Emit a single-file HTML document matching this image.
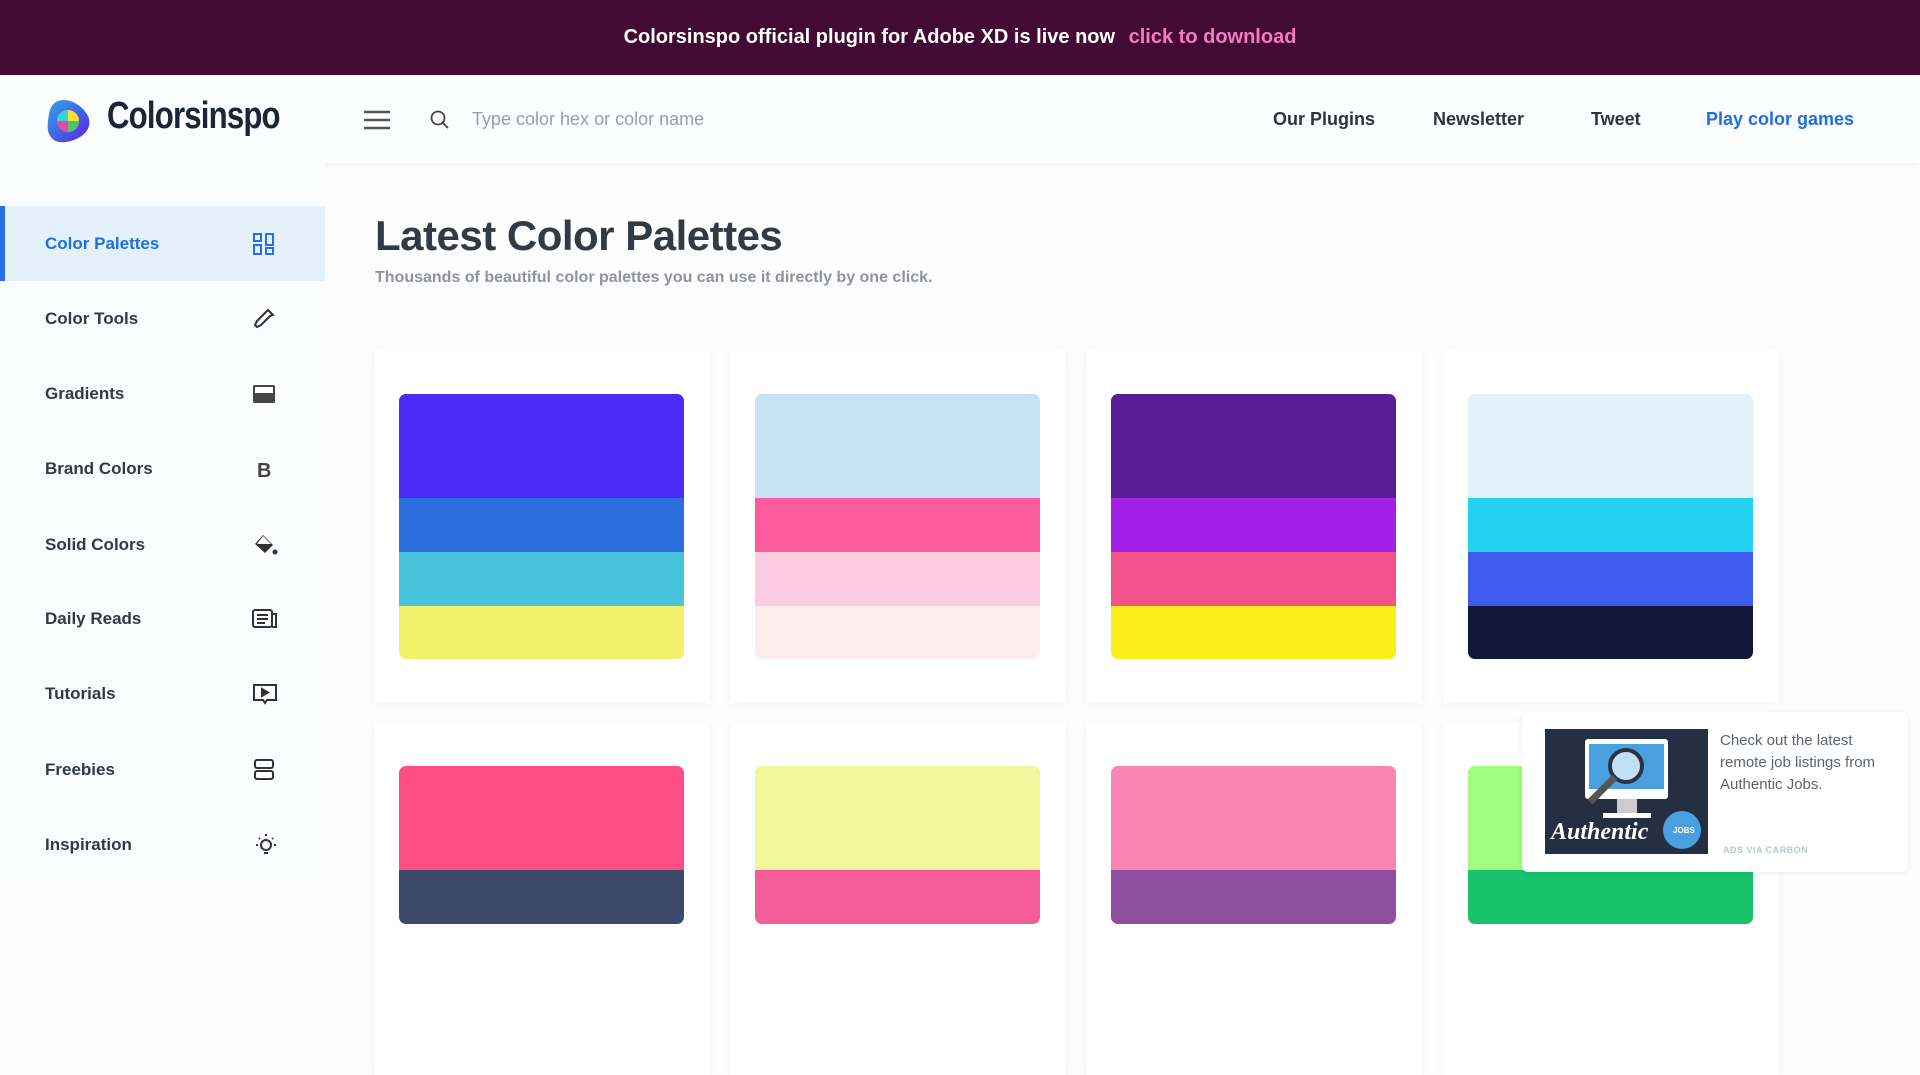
<!DOCTYPE html>
<html><head><meta charset="utf-8"><style>
*{margin:0;padding:0;box-sizing:border-box}
body{width:1920px;height:878px;overflow:hidden;background:#fdfdfe;font-family:"Liberation Sans",sans-serif;position:relative}
.banner{position:absolute;left:0;top:0;width:1920px;height:75px;background:#430b33;color:#fff;font-weight:bold;font-size:20px;text-align:center;line-height:75px}
.banner span{color:#f57ac4;margin-left:8px}
.header{position:absolute;left:0;top:75px;width:1920px;height:88px;background:#fcfdff;box-shadow:0 2px 6px rgba(0,0,0,.06)}
.logo{position:absolute;left:107px;top:20px;font-size:38px;font-weight:bold;color:#1d2437;letter-spacing:-1px;transform:scaleX(.82);transform-origin:left}
.nav{position:absolute;top:34px;font-size:18px;font-weight:bold;color:#2d3340}
.side{position:absolute;left:0;top:163px;width:325px;height:715px;background:#fbfcfe}
.item{position:absolute;left:0;width:325px;height:75px;font-size:17px;font-weight:bold;color:#333a44;line-height:75px;padding-left:45px}
.item svg{position:absolute;left:252px;top:26px}
.item.act{background:#e4f1fa;color:#1f6fe0;border-left:5px solid #2a6ee6;padding-left:40px}
.item.act svg{left:247px}
h1{position:absolute;left:375px;top:212px;font-size:42px;color:#343a45;font-weight:bold;letter-spacing:-.5px}
.sub{position:absolute;left:375px;top:269px;font-size:16px;color:#8f949b;font-weight:bold}
.card{position:absolute;width:334px;height:353px;background:#fff;box-shadow:0 2px 12px rgba(0,0,0,.04)}
.pal{position:absolute;left:24px;top:44px;width:285px;border-radius:7px;overflow:hidden}
.pal div{width:100%}
.ad{position:absolute;left:1522px;top:712px;width:386px;height:160px;background:#fff;border-radius:6px;box-shadow:0 1px 6px rgba(0,0,0,.08)}
</style></head><body>
<div class="banner">Colorsinspo official plugin for Adobe XD is live now <span>click to download</span></div>
<div class="header">
<svg style="position:absolute;left:46px;top:23px" width="46" height="46" viewBox="0 0 46 46"><defs><linearGradient id="g" x1="0" y1="0" x2="1" y2="1"><stop offset="0" stop-color="#2ea8e8"/><stop offset="1" stop-color="#5a22e0"/></linearGradient></defs><path d="M10 4C20-2 36 6 42 18 48 32 34 42 20 44 6 46 0 36 2 24 3 14 4 8 10 4Z" fill="url(#g)"/><circle cx="22" cy="23" r="11" fill="#f4e23a"/><path d="M22 23V12A11 11 0 0 0 11 23Z" fill="#3ad0d6"/><path d="M22 23H11A11 11 0 0 0 22 34Z" fill="#e04aa8"/><path d="M22 23V34A11 11 0 0 0 33 23Z" fill="#4fc36a"/></svg>
<div class="logo">Colorsinspo</div>
<svg style="position:absolute;left:364px;top:35px" width="26" height="20"><g stroke="#555" stroke-width="2.4"><line x1="0" y1="2" x2="26" y2="2"/><line x1="0" y1="10" x2="26" y2="10"/><line x1="0" y1="18" x2="26" y2="18"/></g></svg>
<svg style="position:absolute;left:430px;top:35px" width="20" height="20"><circle cx="8" cy="8" r="6.5" fill="none" stroke="#444" stroke-width="1.8"/><line x1="13" y1="13" x2="18" y2="18" stroke="#444" stroke-width="1.8"/></svg>
<div style="position:absolute;left:472px;top:34px;font-size:18px;color:#9a9ea5">Type color hex or color name</div>
<div class="nav" style="left:1273px">Our Plugins</div>
<div class="nav" style="left:1433px">Newsletter</div>
<div class="nav" style="left:1591px">Tweet</div>
<div class="nav" style="left:1706px;color:#1f6fe0">Play color games</div>
</div>
<div class="side">
<div class="item act" style="top:43px">Color Palettes<svg width="24" height="24" viewBox="0 0 24 24" fill="none" stroke="#2a6ee6" stroke-width="2"><rect x="2" y="2" width="7" height="7"/><rect x="14" y="2" width="7" height="11"/><rect x="2" y="13" width="7" height="9"/><rect x="14" y="16" width="7" height="6"/></svg></div>
<div class="item" style="top:118px">Color Tools<svg width="24" height="24" viewBox="0 0 24 24" fill="none" stroke="#333" stroke-width="2"><path d="M16 3l5 5-3 1-9 9-4 2-2-2 2-4 9-9z"/></svg></div>
<div class="item" style="top:193px">Gradients<svg width="24" height="24" viewBox="0 0 24 24"><rect x="1" y="3" width="22" height="18" rx="2" fill="#444"/><rect x="3" y="5" width="18" height="6" fill="#fff"/></svg></div>
<div class="item" style="top:268px">Brand Colors<svg width="24" height="24" viewBox="0 0 24 24"><text x="5" y="20" font-family="Liberation Sans" font-weight="bold" font-size="20" fill="#444">B</text></svg></div>
<div class="item" style="top:344px">Solid Colors<svg width="26" height="24" viewBox="0 0 26 24"><path d="M11 2l10 10-8 8-10-9z" fill="#333"/><path d="M5 11h14l-8-8z" fill="#fff"/><circle cx="23" cy="19" r="2.5" fill="#333"/></svg></div>
<div class="item" style="top:418px">Daily Reads<svg width="26" height="24" viewBox="0 0 26 24" fill="none" stroke="#333" stroke-width="2"><rect x="1" y="3" width="19" height="17" rx="2"/><path d="M20 7h4v13h-4M5 8h11M5 12h11M5 16h8"/></svg></div>
<div class="item" style="top:493px">Tutorials<svg width="26" height="24" viewBox="0 0 26 24" fill="none" stroke="#333" stroke-width="2"><path d="M2 3h22v15H15l-2 3-2-3H2z"/><path d="M10 7l6 3.5-6 3.5z" fill="#333"/></svg></div>
<div class="item" style="top:569px">Freebies<svg width="24" height="24" viewBox="0 0 24 24" fill="none" stroke="#333" stroke-width="2"><rect x="3" y="2" width="18" height="8" rx="2"/><rect x="3" y="13" width="18" height="8" rx="2"/></svg></div>
<div class="item" style="top:644px">Inspiration<svg width="28" height="24" viewBox="0 0 28 24" fill="none" stroke="#333" stroke-width="2"><circle cx="14" cy="12" r="5"/><path d="M12 20h4M14 1v2M4 12h2M22 12h2M7 5l1 1M21 5l-1 1"/></svg></div>
</div>
<h1>Latest Color Palettes</h1>
<div class="sub">Thousands of beautiful color palettes you can use it directly by one click.</div>

<div class="card" style="left:375px;top:350px"><div class="pal"><div style="height:104px;background:#4b2bf5"></div><div style="height:54px;background:#2a6ee0"></div><div style="height:54px;background:#48c3dc"></div><div style="height:53px;background:#f3f06a"></div></div></div>
<div class="card" style="left:731px;top:350px"><div class="pal"><div style="height:104px;background:#c5e3f3"></div><div style="height:54px;background:#fc5c9c"></div><div style="height:54px;background:#fccde2"></div><div style="height:53px;background:#fdeeee"></div></div></div>
<div class="card" style="left:1087px;top:350px"><div class="pal"><div style="height:104px;background:#5a1b97"></div><div style="height:54px;background:#a020e8"></div><div style="height:54px;background:#f0548a"></div><div style="height:53px;background:#fbee1a"></div></div></div>
<div class="card" style="left:1444px;top:350px"><div class="pal"><div style="height:104px;background:#e3f1f8"></div><div style="height:54px;background:#23d2ef"></div><div style="height:54px;background:#3f5bef"></div><div style="height:53px;background:#12183a"></div></div></div>

<div class="card" style="left:375px;top:722px"><div class="pal"><div style="height:104px;background:#fd4f84"></div><div style="height:54px;background:#3e4a6a"></div></div></div>
<div class="card" style="left:731px;top:722px"><div class="pal"><div style="height:104px;background:#f3f79b"></div><div style="height:54px;background:#f65b9a"></div></div></div>
<div class="card" style="left:1087px;top:722px"><div class="pal"><div style="height:104px;background:#fb85b0"></div><div style="height:54px;background:#8f4fa0"></div></div></div>
<div class="card" style="left:1444px;top:722px"><div class="pal"><div style="height:104px;background:#a2fd80"></div><div style="height:54px;background:#17c26b"></div></div></div>

<div class="ad">
<svg style="position:absolute;left:23px;top:17px" width="163" height="125" viewBox="0 0 163 125"><rect width="163" height="125" fill="#242f42"/><rect x="40" y="10" width="83" height="60" rx="3" fill="#fff"/><rect x="44" y="15" width="75" height="45" fill="#4a9fdf"/><rect x="72" y="70" width="20" height="16" fill="#ccc"/><rect x="58" y="84" width="48" height="5" fill="#fff"/><circle cx="81" cy="37" r="16" fill="#bfe0f5" stroke="#2a3344" stroke-width="4"/><line x1="70" y1="48" x2="45" y2="73" stroke="#555" stroke-width="7"/><circle cx="137" cy="101" r="19" fill="#4a9fdf"/><text x="128" y="104" font-size="8" font-weight="bold" fill="#fff" font-family="Liberation Sans">JOBS</text><text x="6" y="110" font-size="24" font-style="italic" font-weight="bold" fill="#fff" font-family="Liberation Serif">Authentic</text></svg>
<div style="position:absolute;left:198px;top:18px;width:180px;font-size:15px;line-height:22px;color:#5d6470">Check out the latest remote job listings from Authentic Jobs.</div>
<div style="position:absolute;left:201px;top:133px;font-size:9px;font-weight:bold;color:#b8c6d6;letter-spacing:.5px">ADS VIA CARBON</div>
</div>
</body></html>
